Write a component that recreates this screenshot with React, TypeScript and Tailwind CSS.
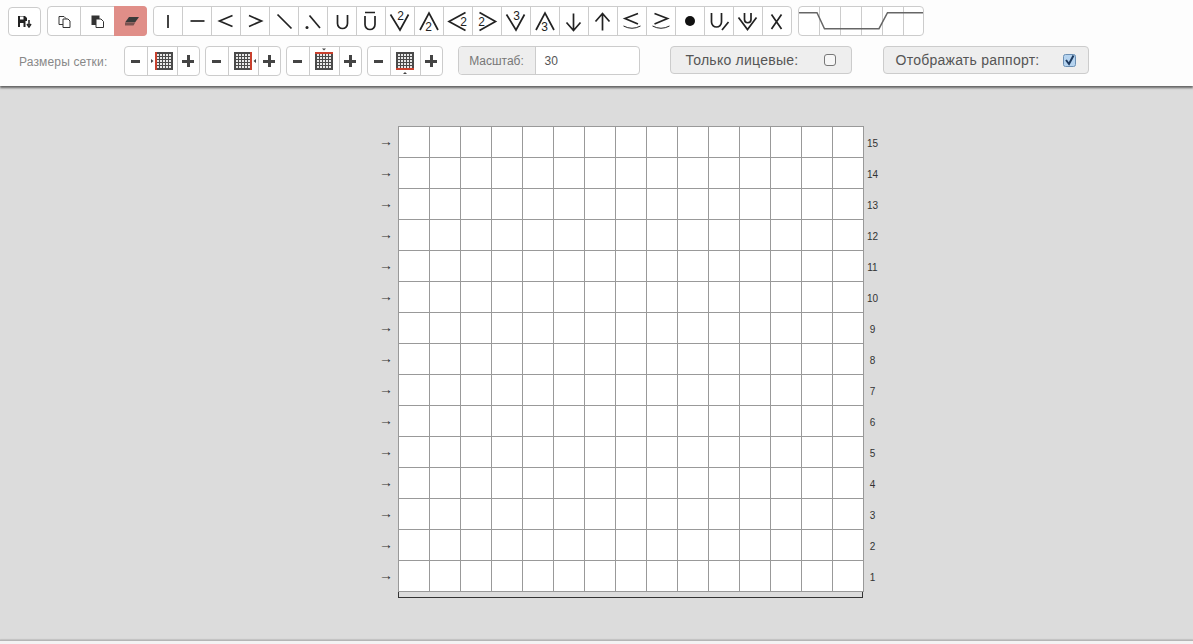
import type { ReactNode } from 'react'

const ink = '#222'

function Text({ x, y, children }: { x: number; y: number; children: ReactNode }) {
  return (
    <text x={x} y={y} fontSize="12" fill={ink} stroke="none" textAnchor="middle" fontFamily="Liberation Sans, sans-serif">
      {children}
    </text>
  )
}

const symbols: ReactNode[] = [
  <path d="M14.5 8.5V21.5" />,
  <path d="M8 14.5H22" />,
  <path d="M21 9L8 14.5L21 20" />,
  <path d="M8.5 9L21 14.5L8.5 20" />,
  <path d="M8 8L22 22" />,
  <>
    <path d="M11 9L21.5 21.5" />
    <circle cx="8.5" cy="21" r="1.5" fill={ink} stroke="none" />
  </>,
  <path d="M10 8.5V17A5 5 0 0 0 20 17V8.5" />,
  <path d="M8.5 6H18.5M8.5 9.5V18A5 5 0 0 0 18.5 18V9.5" />,
  <>
    <path d="M5 8L14.5 23.5L23 8" />
    <Text x={15} y={13}>2</Text>
  </>,
  <>
    <path d="M5.5 23.5L14.5 6.5L23.5 23.5" />
    <Text x={14} y={24}>2</Text>
  </>,
  <>
    <path d="M22 6L5.5 15L22 24" />
    <Text x={20} y={19}>2</Text>
  </>,
  <>
    <path d="M7 6L23 15L7 24" />
    <Text x={9} y={19}>2</Text>
  </>,
  <>
    <path d="M5 8L14.5 23.5L23 8" />
    <Text x={15} y={13}>3</Text>
  </>,
  <>
    <path d="M5.5 23.5L14.5 6.5L23.5 23.5" />
    <Text x={14} y={24}>3</Text>
  </>,
  <path d="M14 7V24M7 16L14 24L21 16" />,
  <path d="M14 24V7M7 15L14 7L21 15" />,
  <>
    <path d="M20.5 7L7.5 12L20.5 17.5" />
    <path d="M6 19.5Q14.5 24 23 19.5" strokeWidth="1" />
  </>,
  <>
    <path d="M8 7L21 12L8 17.5" />
    <path d="M6 19.5Q14.5 24 23 19.5" strokeWidth="1" />
  </>,
  <circle cx="14.5" cy="14.5" r="5" fill="#111" stroke="none" />,
  <path d="M7 6.5V15.5A5 5 0 0 0 17 15.5V6.5M17.5 23.5L24 15.5" />,
  <path d="M5 11L14 23L23 11M11 6.5V13A3.2 3.2 0 0 0 17.5 13V6.5" />,
  <path d="M9 8L19 22.5M19 8L9 22.5" />,
]

function Glyph({ children }: { children: ReactNode }) {
  return (
    <svg viewBox="0.5 0.5 29 30" className="h-[30px] w-[29px]" fill="none" stroke={ink} strokeWidth="1.7">
      {children}
    </svg>
  )
}

function GridIcon({ edge }: { edge: 'left' | 'right' | 'top' | 'bottom' }) {
  const cells = [0, 1, 2, 3, 4]
  const x = edge === 'left' ? 7 : 5
  return (
    <svg viewBox="0 0 29 30" className="h-[30px] w-[29px]">
      <rect x={x} y="5" width="18" height="18" fill="#4a4a4a" />
      {cells.map((r) =>
        cells.map((c) => (
          <rect key={`${r}-${c}`} x={x + 2 + c * 3} y={7 + r * 3} width="2" height="2" fill="#e8e8e8" />
        )),
      )}
      {edge === 'left' && (
        <>
          <rect x="7" y="5" width="2" height="18" fill="#c9402d" />
          <path d="M3 12L5.5 14L3 16Z" fill="#444" />
        </>
      )}
      {edge === 'right' && (
        <>
          <rect x="21" y="5" width="2" height="18" fill="#c9402d" />
          <path d="M27 12L24.5 14L27 16Z" fill="#444" />
        </>
      )}
      {edge === 'top' && (
        <>
          <rect x="5" y="5" width="18" height="2" fill="#c9402d" />
          <path d="M12 1.5H16L14 3.5Z" fill="#444" />
        </>
      )}
      {edge === 'bottom' && (
        <>
          <rect x="5" y="21" width="18" height="2" fill="#c9402d" />
          <path d="M12 27H16L14 25Z" fill="#444" />
        </>
      )}
    </svg>
  )
}

function Stepper({ edge }: { edge: 'left' | 'right' | 'top' | 'bottom' }) {
  return (
    <div className="flex h-[30px] w-[75.5px] rounded border border-[#ccc] bg-white">
      <div className="flex w-[22.5px] items-center justify-center border-r border-[#ccc]">
        <div className="h-[3px] w-[9px] bg-[#444]" />
      </div>
      <GridIcon edge={edge} />
      <div className="relative flex flex-1 items-center justify-center border-l border-[#ccc]">
        <div className="h-[3px] w-[12px] bg-[#444]" />
        <div className="absolute h-[12px] w-[3px] bg-[#444]" />
      </div>
    </div>
  )
}

function ToggleBox({ label, checked, className }: { label: string; checked?: boolean; className: string }) {
  return (
    <div className={`flex h-[28px] items-center justify-between rounded border border-[#ccc] bg-[#eee] text-sm tracking-[0.25px] text-[#555] ${className}`}>
      <span>{label}</span>
      {checked ? (
        <svg viewBox="0 0 13 13" className="h-[13px] w-[13px]">
          <rect x="0.5" y="0.5" width="12" height="12" rx="2" fill="#b5d3ef" stroke="#6b8fb3" />
          <path d="M3 6L6 10L10.5 1.5" fill="none" stroke="#1d3a5f" strokeWidth="2" />
        </svg>
      ) : (
        <div className="h-[12px] w-[12px] rounded-[3px] border border-[#777] bg-[#f6f6f6]" />
      )}
    </div>
  )
}

const rows = Array.from({ length: 15 }, (_, i) => 15 - i)
const cols = Array.from({ length: 15 }, (_, i) => i)

export default function App() {
  return (
    <div className="flex h-[644px] flex-col overflow-hidden bg-[#dcdcdc] font-['Liberation_Sans',sans-serif]">
      <header className="relative z-10 h-[86px] shrink-0 bg-[#fdfdfd] pl-2 pt-1.5 shadow-[0_2px_2px_rgba(0,0,0,0.55)]">
        <div className="flex items-start">
          <button className="mt-px flex h-[29px] w-[33px] items-center justify-center rounded border border-[#ccc] bg-white">
            <svg viewBox="0 0 14 12" className="h-[12px] w-[14px]">
              <path d="M0 0H7L9 2V5H7.5V11H0Z" fill="#222" />
              <rect x="2" y="0.5" width="3.5" height="3" fill="#fff" />
              <rect x="2" y="7" width="3.5" height="4" fill="#fff" />
              <path d="M11 4V9M9 8L11 11L13 8" fill="none" stroke="#222" strokeWidth="1.5" />
            </svg>
          </button>
          <div className="ml-1.5 flex h-[30px] w-[100px] rounded border border-[#ccc] bg-white">
            <div className="flex w-[33px] items-center justify-center border-r border-[#ccc]">
              <svg viewBox="0 0 13 13" className="h-[13px] w-[13px]" fill="#fff" stroke="#333" strokeWidth="1">
                <path d="M1 1.5H6L8 3.5V9.5H1Z" />
                <path d="M5 4H10L12 6V12.5H5Z" />
              </svg>
            </div>
            <div className="flex w-[33px] items-center justify-center">
              <svg viewBox="0 0 13 13" className="h-[13px] w-[13px]">
                <rect x="0.5" y="0.5" width="8" height="9.5" fill="#333" />
                <path d="M5 4H10L12.5 6.5V12.5H5Z" fill="#fff" stroke="#333" />
              </svg>
            </div>
            <div className="-my-px -mr-px flex flex-1 items-center justify-center rounded-r bg-[#e08e88] pl-0.5">
              <svg viewBox="0 0 14 9" className="h-[9px] w-[14px]">
                <path d="M4 0H14L10 5.5H0Z" fill="#3a3a3a" />
                <path d="M0 6H10L8.5 8.5H0Z" fill="#7a5250" />
              </svg>
            </div>
          </div>
          <div className="ml-1.5 flex h-[30px] w-[639px] rounded border border-[#ccc] bg-white">
            {symbols.map((symbol, i) => (
              <div key={i} className={`w-[29px] shrink-0 ${i > 0 ? '-ml-px box-content border-l border-[#ccc]' : ''}`}>
                <Glyph>{symbol}</Glyph>
              </div>
            ))}
          </div>
          <div className="relative ml-[5.5px] flex h-[30px] w-[126.5px] overflow-hidden rounded border border-[#ccc] bg-white">
            {[0, 1, 2, 3, 4, 5].map((n) => (
              <div key={n} className={`shrink-0 ${n > 0 ? 'w-[21px] border-l border-[#ccc]' : 'w-[20.5px]'}`} />
            ))}
            <svg viewBox="0 0 126 30" className="absolute left-0 top-0 h-[30px] w-[126px]" fill="none" stroke="#666" strokeWidth="1.5">
              <path d="M0 5.7H18L25.5 21.7H80L88.5 5.7H126" />
            </svg>
          </div>
        </div>
        <div className="mt-[10px] flex items-start">
          <span className="ml-[11px] w-[105px] pt-2 text-xs tracking-[0.15px] text-[#888]">Размеры сетки:</span>
          <div className="flex gap-[5.5px]">
            <Stepper edge="left" />
            <Stepper edge="right" />
            <Stepper edge="top" />
            <Stepper edge="bottom" />
          </div>
          <div className="ml-[15px] flex h-[29px] w-[182px] rounded border border-[#ccc] bg-white text-xs text-[#555]">
            <span className="flex w-[77px] items-center justify-center rounded-l border-r border-[#ccc] bg-[#eee] text-[#777]">Масштаб:</span>
            <span className="flex items-center pl-[9px]">30</span>
          </div>
          <ToggleBox label="Только лицевые:" className="ml-[30px] w-[182px] pl-[15px] pr-[15px]" />
          <ToggleBox label="Отображать раппорт:" checked className="ml-[31px] w-[206px] pl-[12px] pr-[12px]" />
        </div>
      </header>

      <main className="flex-1 pl-[379px] pt-[40px]">
        <div className="flex">
          <div className="flex w-[19px] flex-col">
            {rows.map((r) => (
              <div key={r} className="flex h-[31px] items-center pb-[2px] text-sm leading-none text-[#333]">→</div>
            ))}
          </div>
          <div>
            <div className="grid w-[466px] grid-cols-[repeat(15,31px)] border-l border-t border-[#999] bg-white">
              {rows.map((r) =>
                cols.map((c) => <div key={`${r}-${c}`} className="h-[31px] border-b border-r border-[#999]" />),
              )}
            </div>
            <div className="h-[6px] w-[465px] border-x border-b border-[#333]" />
          </div>
          <div className="-ml-px flex w-[19px] flex-col items-center pt-[2px]">
            {rows.map((r) => (
              <div key={r} className="flex h-[31px] items-center text-[10px] text-[#333]">{r}</div>
            ))}
          </div>
        </div>
      </main>

      <footer className="h-1 shrink-0 border-t border-[#b5b5b5] bg-[#f3f3f3] shadow-[0_-1px_1px_rgba(0,0,0,0.12)]" />
    </div>
  )
}
